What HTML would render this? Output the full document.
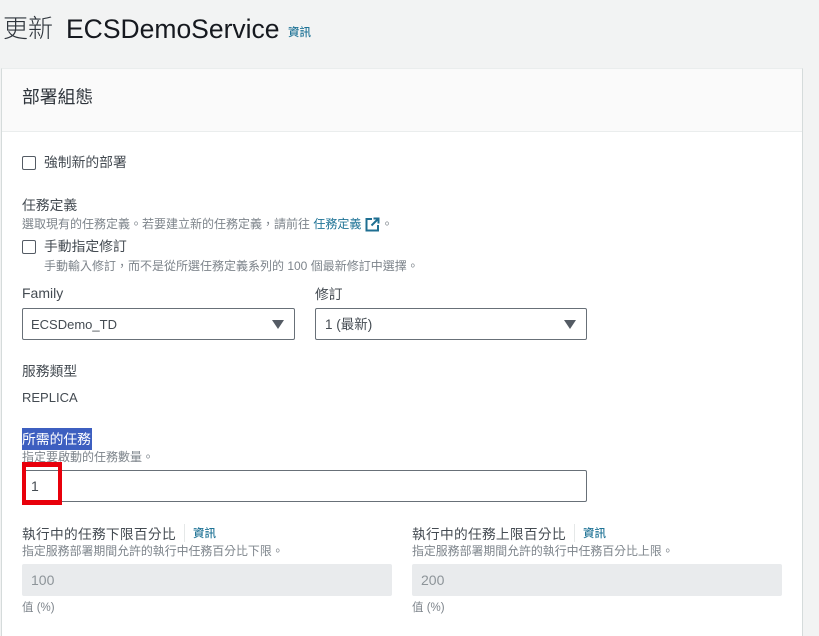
<!DOCTYPE html>
<html><head><meta charset="utf-8"><style>
html,body{margin:0;padding:0}
body{width:819px;height:636px;overflow:hidden;background:#f2f3f3;position:relative;font-family:"Liberation Sans","Noto Sans CJK TC",sans-serif;color:#16191f}
.t{position:absolute;white-space:nowrap;line-height:18px;font-size:14px;color:#444b52}
.h{position:absolute;white-space:nowrap;line-height:16px;font-size:11.5px;color:#7d848b}
.l{color:#1f7396}
.b{position:absolute;box-sizing:border-box;background:#fff;border:1px solid #687078;border-radius:2px}
.c{position:absolute;left:22px;width:14px;height:14px;box-sizing:border-box;border:1px solid #545b64;border-radius:2px;background:#fff}
.a{position:absolute;width:0;height:0;border-left:6px solid transparent;border-right:6px solid transparent;border-top:9px solid #545b64}
.d{position:absolute;top:564px;width:370px;height:32px;background:#e9ebed;border-radius:2px}
</style></head><body>
<div style="position:absolute;left:3px;top:10px;font-size:25px;line-height:38px;font-weight:300;color:#2e343b;white-space:nowrap">更新</div>
<div style="position:absolute;left:66px;top:10px;font-size:26.5px;line-height:38px;color:#16191f;white-space:nowrap">ECSDemoService</div>
<div class="h l" style="left:288px;top:25px;font-weight:500">資訊</div>

<div style="position:absolute;left:1px;top:68px;width:802px;height:568px;box-sizing:border-box;background:#fff;border-left:1px solid #d5dbdb;border-right:1px solid #d5dbdb;border-top:1px solid #eaeded"></div>
<div style="position:absolute;left:2px;top:69px;width:800px;height:63px;box-sizing:border-box;background:#fafafa;border-bottom:1px solid #eaeded"></div>
<div class="t" style="left:22px;top:86px;font-size:17.8px;line-height:22px;color:#2e343b">部署組態</div>

<div class="c" style="top:156px"></div>
<div class="t" style="left:44px;top:154px;font-size:13.8px">強制新的部署</div>

<div class="t" style="left:22px;top:197px;font-size:13.8px">任務定義</div>
<div class="h" style="left:22px;top:216px;font-size:12px">選取現有的任務定義。若要建立新的任務定義&#xFF0C;請前往 <span class="l">任務定義</span></div>
<svg style="position:absolute;left:365px;top:217px" width="15" height="15" viewBox="0 0 15 15" fill="none" stroke="#1f6f92" stroke-width="2"><path d="M7 2H1.5v11.5H13V8"/><path d="M8.5 1.5H13.5V6.5M13 2L6.5 8.5"/></svg>
<div class="h" style="left:381px;top:216px;font-size:12px">。</div>

<div class="c" style="top:240px"></div>
<div class="t" style="left:44px;top:238px;font-size:13.8px">手動指定修訂</div>
<div class="h" style="left:44px;top:258px;font-size:12px">手動輸入修訂&#xFF0C;而不是從所選任務定義系列的 100 個最新修訂中選擇。</div>

<div class="t" style="left:22px;top:284px">Family</div>
<div class="t" style="left:315px;top:285px;font-size:13.8px;margin-top:1px">修訂</div>
<div class="b" style="left:22px;top:308px;width:273px;height:32px"></div>
<div class="t" style="left:31px;top:316px;font-size:13px">ECSDemo_TD</div>
<div class="a" style="left:272px;top:320px"></div>
<div class="b" style="left:315px;top:308px;width:272px;height:32px"></div>
<div class="t" style="left:325px;top:316px;font-size:13.5px">1 (最新)</div>
<div class="a" style="left:564px;top:320px"></div>

<div class="t" style="left:22px;top:363px;font-size:13.8px">服務類型</div>
<div class="t" style="left:22px;top:389px;font-size:13px">REPLICA</div>

<div style="position:absolute;left:22px;top:428px;width:70px;height:22px;background:#3d5fc0"></div>
<div class="t" style="left:22px;top:431px;color:#fff;font-size:13.8px">所需的任務</div>
<div class="h" style="left:22px;top:449px;font-size:12px">指定要啟動的任務數量。</div>
<div class="b" style="left:22px;top:470px;width:565px;height:32px"></div>
<div class="t" style="left:31px;top:477px">1</div>
<div style="position:absolute;left:22px;top:462px;width:40px;height:43px;box-sizing:border-box;border-style:solid;border-color:#e8000b;border-width:5px 4px"></div>

<div class="t" style="left:22px;top:526px;font-size:13.7px;color:#444b52;letter-spacing:.3px">執行中的任務下限百分比</div>
<div style="position:absolute;left:184px;top:524px;width:1px;height:18px;background:#e5e8e8"></div>
<div class="h l" style="left:193px;top:526px;font-weight:500">資訊</div>
<div class="h" style="left:22px;top:543px;font-size:11.9px">指定服務部署期間允許的執行中任務百分比下限。</div>
<div class="d" style="left:22px"></div>
<div class="t" style="left:31px;top:571px;color:#8d9499">100</div>
<div class="h" style="left:22px;top:600px">值 (%)</div>

<div class="t" style="left:412px;top:526px;font-size:13.7px;color:#444b52;letter-spacing:.3px">執行中的任務上限百分比</div>
<div style="position:absolute;left:574px;top:524px;width:1px;height:18px;background:#e5e8e8"></div>
<div class="h l" style="left:583px;top:526px;font-weight:500">資訊</div>
<div class="h" style="left:412px;top:543px;font-size:11.9px">指定服務部署期間允許的執行中任務百分比上限。</div>
<div class="d" style="left:412px"></div>
<div class="t" style="left:421px;top:571px;color:#8d9499">200</div>
<div class="h" style="left:412px;top:600px">值 (%)</div>
</body></html>
